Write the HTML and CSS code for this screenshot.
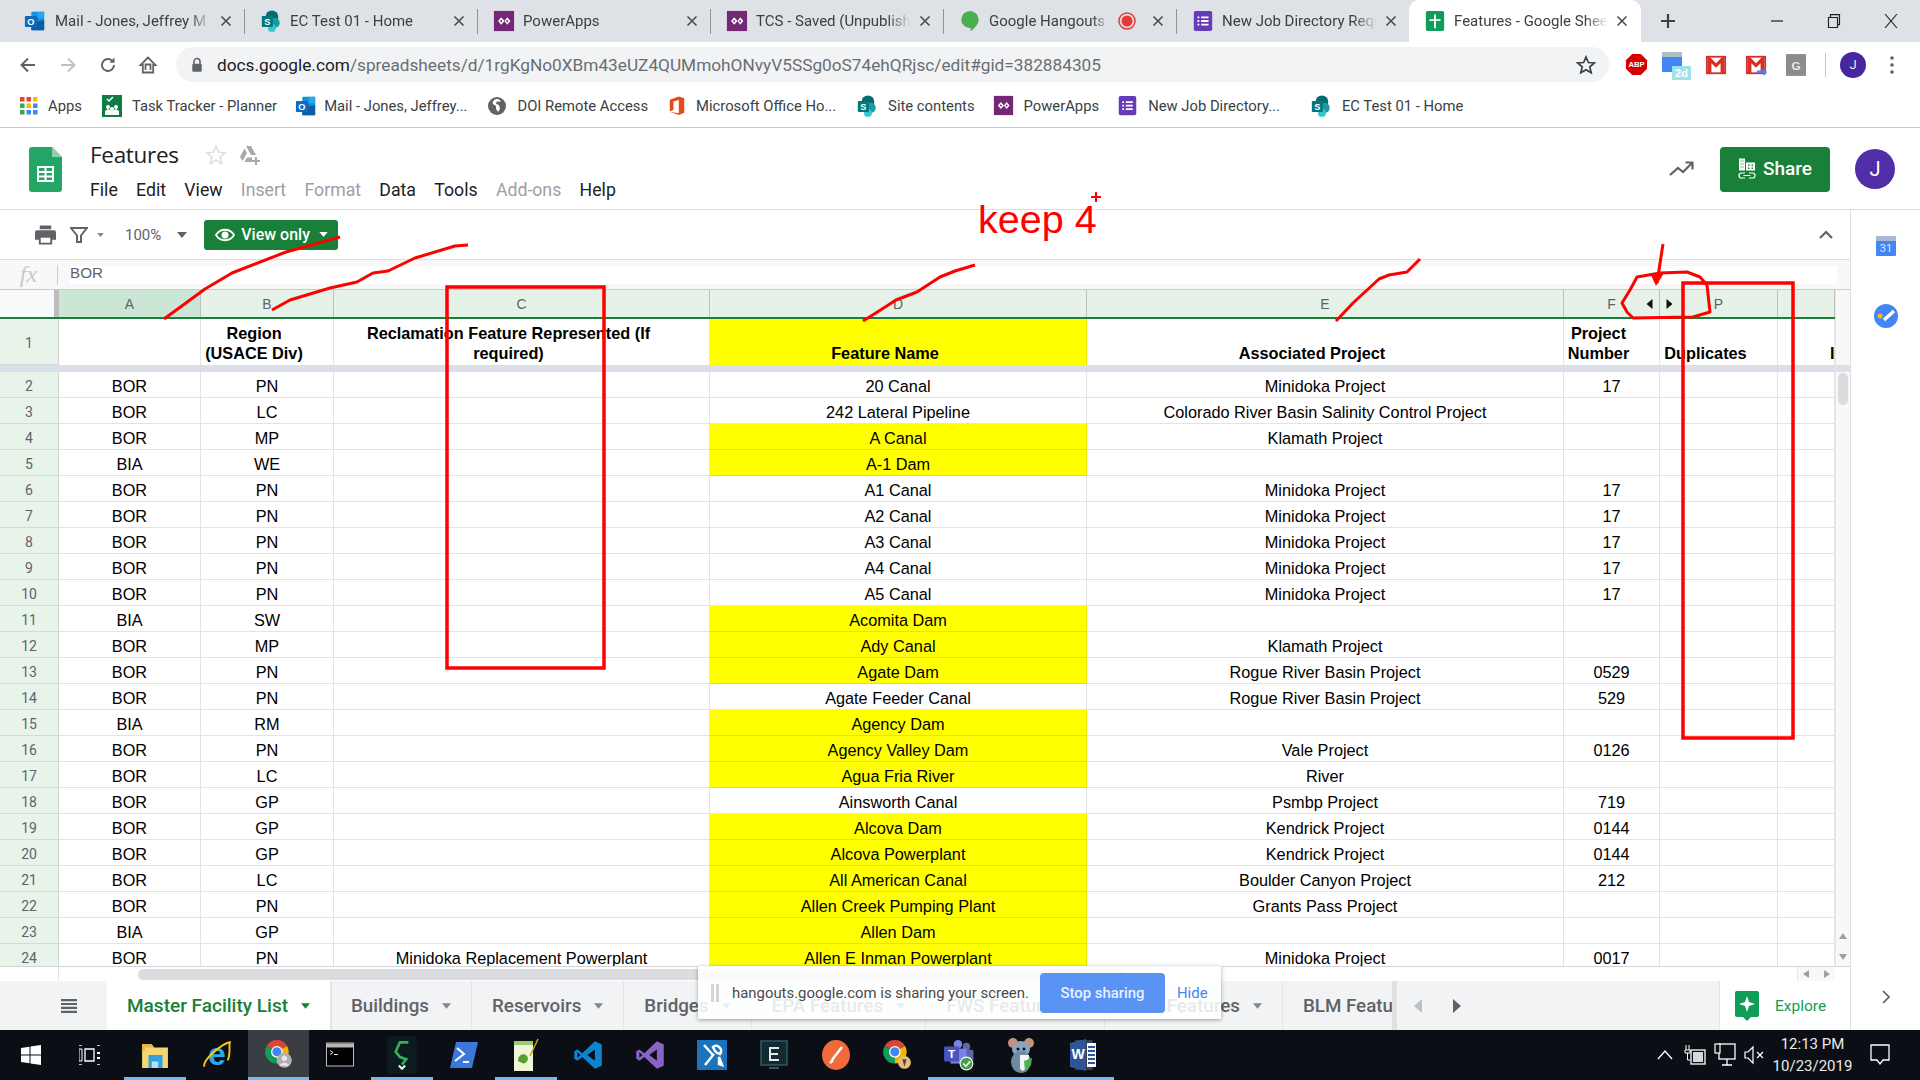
FILE: index.html
```html
<!DOCTYPE html>
<html lang="en">
<head>
<meta charset="utf-8">
<title>Features - Google Sheets</title>
<link rel="stylesheet" href="styles.css">
</head>
<body>
<svg class="defs" width="0" height="0" aria-hidden="true">
  <symbol id="i-outlook" viewBox="0 0 24 24"><rect x="8" y="2" width="14" height="20" rx="1" fill="#1490df"/><rect x="15" y="2" width="7" height="7" fill="#28a8ea"/><rect x="8" y="9" width="7" height="7" fill="#0364b8"/><path d="M8 14l14-3v11H8z" fill="#0a5ea8"/><rect x="1" y="6.500" width="13" height="12" rx="1" fill="#0f6cbd"/><text x="7.500" y="16.500" font-size="10" font-weight="700" fill="#fff" text-anchor="middle" font-family="Liberation Sans">O</text></symbol>
  <symbol id="i-sp" viewBox="0 0 24 24"><circle cx="13" cy="7.500" r="7" fill="#036c70"/><circle cx="16" cy="14" r="5.500" fill="#1a9ba1"/><circle cx="13" cy="19.500" r="4.300" fill="#37c6d0"/><rect x="2" y="6.500" width="12" height="12" rx="1" fill="#03787c"/><text x="8" y="16" font-size="10" font-weight="700" fill="#fff" text-anchor="middle" font-family="Liberation Sans">S</text></symbol>
  <symbol id="i-pa" viewBox="0 0 24 24"><rect x="1" y="1" width="22" height="22" fill="#742774"/><path d="M9 8l3.500 4L9 16l-3.500-4zM15.500 8l3.500 4-3.500 4-3-4z" fill="#fff"/><path d="M9 10.500l1.300 1.500L9 13.500 7.700 12zM15.500 10.500l1.300 1.500-1.300 1.500-1.300-1.500z" fill="#742774"/></symbol>
  <symbol id="i-forms" viewBox="0 0 24 24"><rect x="2" y="1" width="20" height="22" rx="2" fill="#673ab7"/><path d="M6 7h2v2H6zM6 11h2v2H6zM6 15h2v2H6zM10 7h8v2h-8zM10 11h8v2h-8zM10 15h8v2h-8z" fill="#fff"/></symbol>
  <symbol id="i-sheet-tab" viewBox="0 0 24 24"><rect x="2" y="1" width="20" height="22" rx="2" fill="#0f9d58"/><path d="M11 5h2v5h5v2h-5v8h-2v-8H6v-2h5z" fill="#fff"/></symbol>
  <symbol id="i-hangouts" viewBox="0 0 24 24"><path d="M12 1a9.500 9.500 0 0 1 9.500 9.500c0 5.500-5 9.500-9 12.500v-3.500A9 9 0 0 1 2.500 10.500 9.500 9.500 0 0 1 12 1z" fill="#4caf50"/></symbol>
  <symbol id="i-x" viewBox="0 0 12 12"><path d="M1.500 1.500l9 9M10.500 1.500l-9 9" stroke="#45484c" stroke-width="1.500" fill="none"/></symbol>
  <symbol id="i-gmail" viewBox="0 0 24 24"><rect x="2" y="3" width="20" height="18" fill="#fff" stroke="#d32f2f" stroke-width="2"/><path d="M3 3v18h4V10l5 5 5-5v11h4V3h-2l-7 7-7-7z" fill="#d93025"/></symbol>
  <symbol id="i-chrome" viewBox="0 0 24 24"><path d="M12 12L2.470 6.500A11 11 0 0 1 21.530 6.500z" fill="#db4437"/><path d="M12 12L2.470 6.500A11 11 0 0 0 12 23z" fill="#0f9d58"/><path d="M12 12L21.530 6.500A11 11 0 0 1 12 23z" fill="#f4b400"/><circle cx="12" cy="12" r="5.500" fill="#fff"/><circle cx="12" cy="12" r="4.300" fill="#4285f4"/></symbol>
  <symbol id="i-caret" viewBox="0 0 10 6"><path d="M0 0h10L5 6z" fill="currentColor"/></symbol>
</svg>

<div class="page">
  <div class="tabstrip">
    <div class="ctab"><svg class="ctab-ic"><use href="#i-outlook"/></svg><span class="ctab-title">Mail - Jones, Jeffrey M - Outlook</span><svg class="ctab-x"><use href="#i-x"/></svg></div>
    <div class="ctab"><svg class="ctab-ic ctab-ic-sp"><use href="#i-sp"/></svg><span class="ctab-title">EC Test 01 - Home</span><svg class="ctab-x"><use href="#i-x"/></svg></div>
    <div class="ctab"><svg class="ctab-ic ctab-ic-sp"><use href="#i-pa"/></svg><span class="ctab-title">PowerApps</span><svg class="ctab-x"><use href="#i-x"/></svg></div>
    <div class="ctab"><svg class="ctab-ic ctab-ic-sp"><use href="#i-pa"/></svg><span class="ctab-title">TCS - Saved (Unpublished)</span><svg class="ctab-x"><use href="#i-x"/></svg></div>
    <div class="ctab"><svg class="ctab-ic ctab-ic-sp"><use href="#i-hangouts"/></svg><span class="ctab-title">Google Hangouts</span><svg class="rec" viewBox="0 0 18 18" width="18" height="18"><circle cx="9" cy="9" r="8" fill="none" stroke="#e53935" stroke-width="1.500"/><circle cx="9" cy="9" r="5.500" fill="#e53935"/></svg><svg class="ctab-x"><use href="#i-x"/></svg></div>
    <div class="ctab"><svg class="ctab-ic ctab-ic-sp"><use href="#i-forms"/></svg><span class="ctab-title">New Job Directory Request</span><svg class="ctab-x"><use href="#i-x"/></svg></div>
    <div class="ctab ctab-active"><svg class="ctab-ic ctab-ic-sp"><use href="#i-sheet-tab"/></svg><span class="ctab-title">Features - Google Sheets</span><svg class="ctab-x"><use href="#i-x"/></svg></div>
    <svg class="newtab" viewBox="0 0 16 16" width="16" height="16"><path d="M8 1v14M1 8h14" stroke="#3c4043" stroke-width="2.200"/></svg>
    <div class="winctl">
      <svg viewBox="0 0 14 14" width="14" height="14"><path d="M1 7h12" stroke="#202124" stroke-width="1.200"/></svg>
      <svg viewBox="0 0 14 14" width="14" height="14"><path d="M1.500 3.500h9v10h-9zM3.500 3.500V.7h9v10h-2" fill="none" stroke="#202124" stroke-width="1.200"/></svg>
      <svg viewBox="0 0 14 14" width="14" height="14"><path d="M1 0l12 14M13 0L1 14" stroke="#202124" stroke-width="1.100"/></svg>
    </div>
  </div>

  <div class="addrbar">
    <div class="navbtn"><svg viewBox="0 0 20 20" width="20" height="20"><path d="M17 10H4M10 3.500L3.500 10l6.500 6.500" fill="none" stroke="#5f6368" stroke-width="1.900"/></svg></div>
    <div class="navbtn"><svg viewBox="0 0 20 20" width="20" height="20"><path d="M3 10h13M10 3.500l6.500 6.500-6.500 6.500" fill="none" stroke="#bdc1c6" stroke-width="1.900"/></svg></div>
    <div class="navbtn"><svg viewBox="0 0 20 20" width="20" height="20"><path d="M16 10a6 6 0 1 1-1.800-4.300" fill="none" stroke="#5f6368" stroke-width="1.900"/><path d="M16.500 2.500v5.200h-5.200z" fill="#5f6368"/></svg></div>
    <div class="navbtn"><svg viewBox="0 0 20 20" width="20" height="20"><path d="M10 2.500L2.500 10h2.300v7.500h10.400V10h2.300zM7.500 15V9.500h5V15" fill="none" stroke="#5f6368" stroke-width="1.800"/></svg></div>
    <div class="omnibox">
      <svg viewBox="0 0 14 18" width="12" height="16" class="lock"><path d="M3.500 8V5a3.500 3.500 0 0 1 7 0v3" fill="none" stroke="#5f6368" stroke-width="1.800"/><rect x="1.500" y="7.500" width="11" height="9.500" rx="1.300" fill="#5f6368"/></svg>
      <span class="url"><span class="url-host">docs.google.com</span>/spreadsheets/d/1rgKgNo0XBm43eUZ4QUMmohONvyV5SSg0oS74ehQRjsc/edit#gid=382884305</span>
      <svg viewBox="0 0 20 20" width="20" height="20" class="star"><path d="M10 2l2.400 5.500 6 .5-4.600 3.900 1.400 5.900-5.200-3.100-5.200 3.100 1.400-5.900L1.600 8l6-.5z" fill="none" stroke="#3c4043" stroke-width="1.700"/></svg>
    </div>
    <div class="ext"><svg viewBox="0 0 24 24" width="23" height="23"><path d="M7.500 1h9L23 7.500v9L16.500 23h-9L1 16.500v-9z" fill="#d50000"/><text x="12" y="15" font-size="8" font-weight="700" fill="#fff" text-anchor="middle" font-family="Liberation Sans">ABP</text></svg></div>
    <div class="ext"><svg viewBox="0 0 30 30" width="30" height="30"><rect x="1" y="2" width="20" height="20" rx="1" fill="#4285f4"/><rect x="1" y="2" width="20" height="5" fill="#b0bec5"/><rect x="11" y="16" width="19" height="14" fill="#9ee3ea"/><text x="20.500" y="27" font-size="11" font-weight="700" fill="#fff" text-anchor="middle" font-family="Liberation Sans">2d</text></svg></div>
    <div class="ext"><svg width="22" height="22"><use href="#i-gmail"/></svg></div>
    <div class="ext"><svg viewBox="0 0 24 24" width="22" height="22"><use href="#i-gmail"/><path d="M13 18h7v-3l4 4.500L20 24v-3h-7z" fill="#4285f4"/></svg></div>
    <div class="ext"><svg viewBox="0 0 22 24" width="20" height="22"><rect width="22" height="24" fill="#8c8c8c"/><text x="11" y="17" font-size="13" font-weight="700" fill="#e8e8e8" text-anchor="middle" font-family="Liberation Sans">G</text></svg></div>
    <div class="tb-divider"></div>
    <div class="chrome-avatar">J</div>
    <svg class="dots" viewBox="0 0 4 18" width="4" height="18"><circle cx="2" cy="2" r="1.800" fill="#5f6368"/><circle cx="2" cy="9" r="1.800" fill="#5f6368"/><circle cx="2" cy="16" r="1.800" fill="#5f6368"/></svg>
  </div>

  <div class="bookmarks">
    <div class="bm"><svg viewBox="0 0 18 18" width="18" height="18"><g><rect x="0" y="0" width="4.500" height="4.500" fill="#ea4335"/><rect x="6.500" y="0" width="4.500" height="4.500" fill="#ea4335"/><rect x="13" y="0" width="4.500" height="4.500" fill="#fbbc04"/><rect x="0" y="6.500" width="4.500" height="4.500" fill="#34a853"/><rect x="6.500" y="6.500" width="4.500" height="4.500" fill="#fbbc04"/><rect x="13" y="6.500" width="4.500" height="4.500" fill="#4285f4"/><rect x="0" y="13" width="4.500" height="4.500" fill="#34a853"/><rect x="6.500" y="13" width="4.500" height="4.500" fill="#4285f4"/><rect x="13" y="13" width="4.500" height="4.500" fill="#4285f4"/></g></svg><span>Apps</span></div>
    <div class="bm"><svg viewBox="0 0 20 22" width="20" height="22"><rect width="20" height="22" fill="#107c41"/><path d="M5 4l2 2 4-4" stroke="#fff" fill="none" stroke-width="1.500"/><circle cx="6" cy="12" r="2" fill="#fff"/><circle cx="14" cy="12" r="2" fill="#fff"/><circle cx="10" cy="14" r="2" fill="#fff"/><path d="M3 20v-4l3-2 4 2 4-2 3 2v4z" fill="#fff"/></svg><span>Task Tracker - Planner</span></div>
    <div class="bm bm-mail"><svg width="22" height="22"><use href="#i-outlook"/></svg><span>Mail - Jones, Jeffrey...</span></div>
    <div class="bm"><svg viewBox="0 0 20 20" width="20" height="20"><circle cx="10" cy="10" r="9" fill="#5f6368"/><path d="M9 3c-3 1-4 3-3 5l3 2v3l2 3 2-3-1-4-3-1 1-3 2 1 2-1-3-2z" fill="#fff"/></svg><span>DOI Remote Access</span></div>
    <div class="bm"><svg viewBox="0 0 20 22" width="18" height="21"><path d="M2 4.500L12 1l6 2v16l-6 2.500L2 18l10 1.500V5L6 6.500v9.500L2 17.500z" fill="#e64a19"/></svg><span>Microsoft Office Ho...</span></div>
    <div class="bm"><svg width="22" height="22"><use href="#i-sp"/></svg><span>Site contents</span></div>
    <div class="bm bm-tight"><svg width="21" height="21"><use href="#i-pa"/></svg><span>PowerApps</span></div>
    <div class="bm bm-tight"><svg width="21" height="21"><use href="#i-forms"/></svg><span>New Job Directory...</span></div>
    <div class="bm bm-wide"><svg width="22" height="22"><use href="#i-sp"/></svg><span>EC Test 01 - Home</span></div>
  </div>

  <header class="docbar">
    <svg class="doclogo" viewBox="0 0 33 45" width="33" height="45"><path d="M3 0h20l10 10v32a3 3 0 0 1-3 3H3a3 3 0 0 1-3-3V3a3 3 0 0 1 3-3z" fill="#23a566"/><path d="M23 0l10 10H23z" fill="#8ed1b1"/><path d="M8 19h17v16H8zM10 21v3h5.500v-3zM17.500 21v3H23v-3zM10 26v2.500h5.500V26zM17.500 26v2.500H23V26zM10 30.500V33h5.500v-2.500zM17.500 30.500V33H23v-2.500z" fill="#fff" fill-rule="evenodd"/></svg>
    <div class="docmeta">
      <div class="doctitle-row">
        <span class="doctitle">Features</span>
        <svg viewBox="0 0 20 20" width="22" height="22" class="docstar"><path d="M10 2l2.400 5.500 6 .5-4.600 3.900 1.400 5.900-5.200-3.100-5.200 3.100 1.400-5.900L1.600 8l6-.5z" fill="none" stroke="#dadce0" stroke-width="1.300"/></svg>
        <svg viewBox="0 0 22 20" width="22" height="20" class="docdrive"><path d="M8 1h5l5 9h-5zM6.500 3.500L9 8l-4.500 8L2 12zM6.500 17l2.500-4.500h5V17z" fill="#a6a8ab"/><path d="M17 12v3h-3v2h3v3h2v-3h3v-2h-3v-3z" fill="#a6a8ab"/></svg>
      </div>
      <nav class="menu">
        <span>File</span><span>Edit</span><span>View</span><span class="off">Insert</span><span class="off">Format</span><span>Data</span><span>Tools</span><span class="off">Add-ons</span><span>Help</span>
      </nav>
    </div>
    <svg class="trend" viewBox="0 0 26 16" width="26" height="16"><path d="M1 14l8-7 5 4 9-9M16.500 1.500h7v7" fill="none" stroke="#5f6368" stroke-width="2.200"/></svg>
    <div class="share">
      <svg viewBox="0 0 18 22" width="18" height="23"><path d="M1 1h6v12H1zM8 5h9v8H8z" fill="#fff"/><path d="M2.500 3h1v1h-1zM4.500 3h1v1h-1zM2.500 6h1v1h-1zM4.500 6h1v1h-1zM2.500 9h1v1h-1zM4.500 9h1v1h-1zM10 7h1.500v1.500H10zM13.500 7H15v1.500h-1.500zM10 10h1.500v1.500H10zM13.500 10H15v1.500h-1.500z" fill="#188038"/><path d="M7 15.500H3.500a2.500 2.500 0 0 0 0 5H7M11 15.500h3.500a2.500 2.500 0 0 1 0 5H11M5.500 18h7" fill="none" stroke="#fff" stroke-width="1.200"/></svg>
      <span>Share</span>
    </div>
    <div class="doc-avatar">J</div>
  </header>

  <div class="workspace">
    <div class="main">
      <div class="toolbar">
        <svg class="t-print" viewBox="0 0 22 20" width="21" height="20"><path d="M5 0h12v4H5zM2 5h18a2 2 0 0 1 2 2v8h-4v5H4v-5H0V7a2 2 0 0 1 2-2zM6 13v5h10v-5z" fill="#5f6368" fill-rule="evenodd"/></svg>
        <svg class="t-filter" viewBox="0 0 18 18" width="18" height="18"><path d="M1 2h16l-6 7.500V16H7V9.500z" fill="none" stroke="#5f6368" stroke-width="2"/></svg>
        <svg class="t-caret-s"><use href="#i-caret"/></svg>
        <span class="t-zoom">100%</span>
        <svg class="t-caret"><use href="#i-caret"/></svg>
        <div class="viewonly">
          <svg viewBox="0 0 20 20" width="20" height="20"><path d="M1 10C5 3 15 3 19 10 15 17 5 17 1 10z" fill="none" stroke="#fff" stroke-width="1.800"/><circle cx="10" cy="10" r="3.500" fill="#fff"/></svg>
          <span>View only</span>
          <svg class="vo-caret"><use href="#i-caret"/></svg>
        </div>
        <svg class="t-collapse" viewBox="0 0 14 9" width="14" height="9"><path d="M1 8l6-6 6 6" fill="none" stroke="#5f6368" stroke-width="2.200"/></svg>
      </div>

      <div class="formula">
        <span class="fx">fx</span>
        <div class="fx-divider"></div>
        <div class="fx-input">BOR</div>
      </div>

      <div class="gridwrap">
        <div class="grid">
          <div class="row colhead">
            <div class="corner"></div><div class="ch ch-sel">A</div><div class="ch">B</div><div class="ch">C</div><div class="ch">D</div><div class="ch">E</div>
            <div class="ch ch-rel">F<svg class="hid hid-l" viewBox="0 0 6 10"><path d="M6 0v10L0 5z"/></svg></div>
            <div class="ch ch-rel">P<svg class="hid hid-r" viewBox="0 0 6 10"><path d="M0 0v10l6-5z"/></svg></div>
            <div class="ch"></div>
          </div>
          <div class="row row-head">
            <div class="rh">1</div>
            <div class="hc"></div>
            <div class="hc">Region<br>(USACE Div)</div>
            <div class="hc">Reclamation Feature Represented (If<br>required)</div>
            <div class="hc y">Feature Name</div>
            <div class="hc">Associated Project</div>
            <div class="hc">Project<br>Number</div>
            <div class="hc">Duplicates</div>
            <div class="hc hc-last">ID</div>
          </div>
          <div class="freeze"></div>
          <div class="row"><div class="rh">2</div><div class="c">BOR</div><div class="c">PN</div><div class="c"></div><div class="c">20 Canal</div><div class="c">Minidoka Project</div><div class="c">17</div><div class="c"></div><div class="c"></div></div>
          <div class="row"><div class="rh">3</div><div class="c">BOR</div><div class="c">LC</div><div class="c"></div><div class="c">242 Lateral Pipeline</div><div class="c">Colorado River Basin Salinity Control Project</div><div class="c"></div><div class="c"></div><div class="c"></div></div>
          <div class="row"><div class="rh">4</div><div class="c">BOR</div><div class="c">MP</div><div class="c"></div><div class="c y">A Canal</div><div class="c">Klamath Project</div><div class="c"></div><div class="c"></div><div class="c"></div></div>
          <div class="row"><div class="rh">5</div><div class="c">BIA</div><div class="c">WE</div><div class="c"></div><div class="c y">A-1 Dam</div><div class="c"></div><div class="c"></div><div class="c"></div><div class="c"></div></div>
          <div class="row"><div class="rh">6</div><div class="c">BOR</div><div class="c">PN</div><div class="c"></div><div class="c">A1 Canal</div><div class="c">Minidoka Project</div><div class="c">17</div><div class="c"></div><div class="c"></div></div>
          <div class="row"><div class="rh">7</div><div class="c">BOR</div><div class="c">PN</div><div class="c"></div><div class="c">A2 Canal</div><div class="c">Minidoka Project</div><div class="c">17</div><div class="c"></div><div class="c"></div></div>
          <div class="row"><div class="rh">8</div><div class="c">BOR</div><div class="c">PN</div><div class="c"></div><div class="c">A3 Canal</div><div class="c">Minidoka Project</div><div class="c">17</div><div class="c"></div><div class="c"></div></div>
          <div class="row"><div class="rh">9</div><div class="c">BOR</div><div class="c">PN</div><div class="c"></div><div class="c">A4 Canal</div><div class="c">Minidoka Project</div><div class="c">17</div><div class="c"></div><div class="c"></div></div>
          <div class="row"><div class="rh">10</div><div class="c">BOR</div><div class="c">PN</div><div class="c"></div><div class="c">A5 Canal</div><div class="c">Minidoka Project</div><div class="c">17</div><div class="c"></div><div class="c"></div></div>
          <div class="row"><div class="rh">11</div><div class="c">BIA</div><div class="c">SW</div><div class="c"></div><div class="c y">Acomita Dam</div><div class="c"></div><div class="c"></div><div class="c"></div><div class="c"></div></div>
          <div class="row"><div class="rh">12</div><div class="c">BOR</div><div class="c">MP</div><div class="c"></div><div class="c y">Ady Canal</div><div class="c">Klamath Project</div><div class="c"></div><div class="c"></div><div class="c"></div></div>
          <div class="row"><div class="rh">13</div><div class="c">BOR</div><div class="c">PN</div><div class="c"></div><div class="c y">Agate Dam</div><div class="c">Rogue River Basin Project</div><div class="c">0529</div><div class="c"></div><div class="c"></div></div>
          <div class="row"><div class="rh">14</div><div class="c">BOR</div><div class="c">PN</div><div class="c"></div><div class="c">Agate Feeder Canal</div><div class="c">Rogue River Basin Project</div><div class="c">529</div><div class="c"></div><div class="c"></div></div>
          <div class="row"><div class="rh">15</div><div class="c">BIA</div><div class="c">RM</div><div class="c"></div><div class="c y">Agency Dam</div><div class="c"></div><div class="c"></div><div class="c"></div><div class="c"></div></div>
          <div class="row"><div class="rh">16</div><div class="c">BOR</div><div class="c">PN</div><div class="c"></div><div class="c y">Agency Valley Dam</div><div class="c">Vale Project</div><div class="c">0126</div><div class="c"></div><div class="c"></div></div>
          <div class="row"><div class="rh">17</div><div class="c">BOR</div><div class="c">LC</div><div class="c"></div><div class="c y">Agua Fria River</div><div class="c">River</div><div class="c"></div><div class="c"></div><div class="c"></div></div>
          <div class="row"><div class="rh">18</div><div class="c">BOR</div><div class="c">GP</div><div class="c"></div><div class="c">Ainsworth Canal</div><div class="c">Psmbp Project</div><div class="c">719</div><div class="c"></div><div class="c"></div></div>
          <div class="row"><div class="rh">19</div><div class="c">BOR</div><div class="c">GP</div><div class="c"></div><div class="c y">Alcova Dam</div><div class="c">Kendrick Project</div><div class="c">0144</div><div class="c"></div><div class="c"></div></div>
          <div class="row"><div class="rh">20</div><div class="c">BOR</div><div class="c">GP</div><div class="c"></div><div class="c y">Alcova Powerplant</div><div class="c">Kendrick Project</div><div class="c">0144</div><div class="c"></div><div class="c"></div></div>
          <div class="row"><div class="rh">21</div><div class="c">BOR</div><div class="c">LC</div><div class="c"></div><div class="c y">All American Canal</div><div class="c">Boulder Canyon Project</div><div class="c">212</div><div class="c"></div><div class="c"></div></div>
          <div class="row"><div class="rh">22</div><div class="c">BOR</div><div class="c">PN</div><div class="c"></div><div class="c y">Allen Creek Pumping Plant</div><div class="c">Grants Pass Project</div><div class="c"></div><div class="c"></div><div class="c"></div></div>
          <div class="row"><div class="rh">23</div><div class="c">BIA</div><div class="c">GP</div><div class="c"></div><div class="c y">Allen Dam</div><div class="c"></div><div class="c"></div><div class="c"></div><div class="c"></div></div>
          <div class="row"><div class="rh">24</div><div class="c">BOR</div><div class="c">PN</div><div class="c">Minidoka Replacement Powerplant</div><div class="c y">Allen E Inman Powerplant</div><div class="c">Minidoka Project</div><div class="c">0017</div><div class="c"></div><div class="c"></div></div>
        </div>
        <div class="vscroll">
          <div class="vs-top"></div>
          <div class="vs-bar"></div>
          <div class="vs-track"><div class="vs-thumb"></div></div>
          <div class="vs-arrows">
            <svg viewBox="0 0 8 6" width="8" height="6"><path d="M0 6l4-6 4 6z" fill="#9aa0a6"/></svg>
            <svg viewBox="0 0 8 6" width="8" height="6"><path d="M0 0l4 6 4-6z" fill="#9aa0a6"/></svg>
          </div>
        </div>
      </div>

      <div class="hscroll">
        <div class="hs-corner"></div>
        <div class="hs-track"><div class="hs-thumb"></div></div>
        <div class="hs-arrows">
          <svg viewBox="0 0 6 8" width="6" height="8"><path d="M6 0L0 4l6 4z" fill="#9aa0a6"/></svg>
          <svg viewBox="0 0 6 8" width="6" height="8"><path d="M0 0l6 4-6 4z" fill="#9aa0a6"/></svg>
        </div>
      </div>

      <div class="sheetbar">
        <div class="allsheets"><svg viewBox="0 0 16 14" width="16" height="14"><path d="M0 0h16v2.200H0zM0 3.900h16v2.200H0zM0 7.800h16V10H0zM0 11.700h16V14H0z" fill="#5f6368"/></svg></div>
        <div class="sheettabs">
          <div class="stab stab-active"><span>Master Facility List</span><svg class="stab-caret"><use href="#i-caret"/></svg></div>
          <div class="stab"><span>Buildings</span><svg class="stab-caret"><use href="#i-caret"/></svg></div>
          <div class="stab"><span>Reservoirs</span><svg class="stab-caret"><use href="#i-caret"/></svg></div>
          <div class="stab"><span>Bridges</span><svg class="stab-caret"><use href="#i-caret"/></svg></div>
          <div class="stab"><span>EPA Features</span><svg class="stab-caret"><use href="#i-caret"/></svg></div>
          <div class="stab"><span>FWS Features</span><svg class="stab-caret"><use href="#i-caret"/></svg></div>
          <div class="stab"><span>NPS Features</span><svg class="stab-caret"><use href="#i-caret"/></svg></div>
          <div class="stab"><span>BLM Features</span></div>
        </div>
        <div class="tabnav">
          <svg viewBox="0 0 8 14" width="8" height="14"><path d="M8 0v14L0 7z" fill="#bdc1c6"/></svg>
          <svg viewBox="0 0 8 14" width="8" height="14"><path d="M0 0v14l8-7z" fill="#5f6368"/></svg>
        </div>
        <div class="explore">
          <svg viewBox="0 0 24 30" width="24" height="30"><path d="M2 0h20a2 2 0 0 1 2 2v22a2 2 0 0 1-2 2h-6l-4 4-4-4H2a2 2 0 0 1-2-2V2a2 2 0 0 1 2-2z" fill="#0f9d58"/><path d="M12 5l2 6 6 2-6 2-2 6-2-6-6-2 6-2z" fill="#fff"/></svg>
          <span>Explore</span>
        </div>
      </div>
    </div>
    <aside class="side">
      <svg class="side-cal" viewBox="0 0 20 20" width="20" height="22"><rect width="20" height="20" rx="1" fill="#4285f4"/><rect width="20" height="5" fill="#a9b8d0"/><text x="10" y="16" font-size="11" fill="#dbe7fb" text-anchor="middle" font-family="Roboto">31</text></svg>
      <svg class="side-task" viewBox="0 0 24 24" width="24" height="24"><circle cx="12" cy="12" r="12" fill="#4285f4"/><path d="M10 16L20 7" stroke="#fff" stroke-width="3.500"/><circle cx="6" cy="12" r="2.500" fill="#fbbc04"/></svg>
      <svg class="side-chev" viewBox="0 0 8 14" width="8" height="14"><path d="M1 1l6 6-6 6" fill="none" stroke="#5f6368" stroke-width="1.700"/></svg>
    </aside>
  </div>

  <footer class="taskbar">
    <div class="tk"><svg viewBox="0 0 20 20" width="20" height="20"><path d="M0 3l8.500-1.200V9.500H0zM9.500 1.600L20 0v9.500H9.500zM0 10.500h8.500v7.700L0 17zM9.500 10.500H20V20L9.500 18.400z" fill="#fff"/></svg></div>
    <div class="tk tk-view"><svg viewBox="0 0 22 20" width="22" height="20"><path d="M6 4h9v12H6zM0 0h3M0 20h3M18 0h3M18 20h3" fill="none" stroke="#fff" stroke-width="1.300"/><path d="M18 7h3v2h-3zM18 12h3v2h-3z" fill="#fff"/><path d="M0 4h3v12H0z" fill="none" stroke="#fff"/></svg></div>
    <div class="tk on"><svg viewBox="0 0 26 26" width="28" height="28"><path d="M1 3h9l2 3h13v19H1z" fill="#f6d573"/><path d="M1 3h9l2 3H4v3H1z" fill="#e8b93e"/><rect x="7" y="13" width="13" height="12" fill="#2ea3dc"/><rect x="10" y="19" width="6" height="6" fill="#b5e3f8"/></svg></div>
    <div class="tk"><svg viewBox="0 0 30 30" width="32" height="32"><text x="15" y="24" font-size="30" font-weight="700" fill="#2aa8e8" text-anchor="middle" font-family="Liberation Sans">e</text><path d="M3 26C1 20 20 4 27 3 26 8 28 14 25 20" fill="none" stroke="#f5c518" stroke-width="1.800"/></svg></div>
    <div class="tk tk-active on"><svg viewBox="0 0 30 30" width="32" height="34"><use href="#i-chrome" width="24" height="24" x="1"/><circle cx="20" cy="20" r="7" fill="#b0b0b0"/><circle cx="20" cy="18" r="2.500" fill="#e8e8e8"/><path d="M15.500 25a5 5 0 0 1 9 0z" fill="#e8e8e8"/></svg></div>
    <div class="tk"><svg viewBox="0 0 28 24" width="28" height="25"><rect x=".5" y=".5" width="27" height="23" fill="#000" stroke="#bdbdbd"/><rect x="1" y="1" width="26" height="4" fill="#b5b5b5"/><path d="M4 8l3 2-3 2M8 12h4" stroke="#e8e8e8" fill="none"/></svg></div>
    <div class="tk on"><svg viewBox="0 0 28 36" width="30" height="38"><rect width="28" height="36" rx="3" fill="#0c1c1e"/><path d="M20 6h-8l-4 9 4 5 6 2-4 5" fill="none" stroke="#35b05a" stroke-width="2.500"/><path d="M11 28l3 3 3-3" fill="none" stroke="#f0f0f0" stroke-width="2"/></svg></div>
    <div class="tk"><svg viewBox="0 0 28 26" width="28" height="26"><path d="M6 0h22l-6 26H0z" fill="#3c78d8"/><path d="M7 6l7 6-9 7" fill="none" stroke="#fff" stroke-width="2"/><path d="M13 20h6" stroke="#fff" stroke-width="2"/></svg></div>
    <div class="tk on"><svg viewBox="0 0 26 34" width="26" height="36"><rect x="1" y="3" width="19" height="30" fill="#eef5d8"/><rect x="1" y="3" width="19" height="4" fill="#9ccc65"/><path d="M5 22c0-5 6-8 9-4s-2 9-5 7-4-1-4-3z" fill="#5aa02c"/><path d="M25 1l-8 17" stroke="#d4a017" stroke-width="1.500"/></svg></div>
    <div class="tk"><svg viewBox="0 0 24 24" width="30" height="30"><path d="M17.500 1L23 3.500v17L17.500 23 7.500 13.500 3.500 16.500 1 15V9l2.500-1.500 4 3z" fill="#0d84d2"/><path d="M17.500 7.500L11.500 12l6 4.500zM3.500 9.800v4.400L6 12z" fill="#0b0e14"/></svg></div>
    <div class="tk"><svg viewBox="0 0 24 24" width="30" height="30"><path d="M17.500 1L23 3.500v17L17.500 23 7.500 13.500 3.500 16.500 1 15V9l2.500-1.500 4 3z" fill="#8a63c9"/><path d="M17.500 7.500L11.500 12l6 4.500zM3.500 9.800v4.400L6 12z" fill="#0b0e14"/></svg></div>
    <div class="tk"><svg viewBox="0 0 30 30" width="30" height="30"><rect width="30" height="30" fill="#1a73bc"/><path d="M8 25L17 14M16 7a5 5 0 0 1 7 7l-3-1-2-2zM7 5l9 10M22 17l3 8-3-1z" stroke="#fff" stroke-width="2.500" fill="none"/></svg></div>
    <div class="tk"><svg viewBox="0 0 28 30" width="28" height="30"><rect x="1" y="1" width="26" height="24" fill="#122a30" stroke="#2e5c64" stroke-width="1.500"/><path d="M9 7h10v2h-8v4h7v2h-7v4h8v2H9z" fill="#e8e8e8"/><path d="M9 28h10" stroke="#2e5c64" stroke-width="2"/></svg></div>
    <div class="tk"><svg viewBox="0 0 30 30" width="30" height="32"><ellipse cx="15" cy="15" rx="14" ry="15" fill="#f06a3c"/><path d="M21 7l-10 13M9 23l3-3" stroke="#fff" stroke-width="2.500"/></svg></div>
    <div class="tk"><svg viewBox="0 0 30 30" width="32" height="34"><use href="#i-chrome" width="24" height="24" x="1"/><circle cx="22" cy="22" r="6" fill="#e0c080"/><path d="M20 19h4l-2 7z" fill="#6b3f16"/></svg></div>
    <div class="tk on"><svg viewBox="0 0 30 30" width="32" height="32"><circle cx="22" cy="7" r="3.500" fill="#6264a7"/><path d="M17 10h10a1.500 1.500 0 0 1 1.500 1.500V20H17z" fill="#6264a7"/><circle cx="14" cy="5" r="4" fill="#7b83eb"/><rect x="7" y="9" width="15" height="14" fill="#7b83eb"/><rect x="1" y="7" width="14" height="14" rx="1" fill="#4b53bc"/><text x="8" y="18" font-size="11" font-weight="700" fill="#fff" text-anchor="middle" font-family="Liberation Sans">T</text><circle cx="22" cy="23" r="6.500" fill="#fff"/><circle cx="22" cy="23" r="5.500" fill="#43a047"/><path d="M19 23l2.500 2.500 4-4.500" stroke="#fff" stroke-width="1.500" fill="none"/></svg></div>
    <div class="tk on"><svg viewBox="0 0 30 36" width="30" height="38"><circle cx="7" cy="6" r="5" fill="#c98f78"/><circle cx="23" cy="6" r="5" fill="#c98f78"/><ellipse cx="15" cy="12" rx="9" ry="8" fill="#8aa6bd"/><ellipse cx="15" cy="25" rx="10" ry="11" fill="#6e8ba6"/><path d="M14 18h9l-1 11-5 5-3-2z" fill="#f5f5f5"/><path d="M18 24l8-3-1 7-6 5z" fill="#4caf50"/><circle cx="12" cy="12" r="1.500" fill="#111"/><circle cx="18" cy="12" r="1.500" fill="#111"/></svg></div>
    <div class="tk on"><svg viewBox="0 0 28 34" width="28" height="34"><path d="M6 2l16 0a2 2 0 0 1 2 2v26a2 2 0 0 1-2 2H6z" fill="#fff" opacity=".2"/><path d="M1 5l16-4v32L1 29z" fill="#2b579a"/><path d="M18 5h9v24h-9z" fill="#f5f8fc"/><path d="M19 9h7M19 13h7M19 17h7M19 21h7M19 25h7" stroke="#2b579a" stroke-width="2"/><text x="9" y="21" font-size="14" font-weight="700" fill="#fff" text-anchor="middle" font-family="Liberation Sans">W</text></svg></div>
    <div class="tray">
      <div class="tr"><svg viewBox="0 0 16 10" width="16" height="10"><path d="M1 9l7-8 7 8" fill="none" stroke="#fff" stroke-width="1.300"/></svg></div>
      <div class="tr"><svg viewBox="0 0 22 22" width="22" height="22"><rect x="7" y="6" width="14" height="14" fill="none" stroke="#fff" stroke-width="1.300"/><rect x="9" y="8" width="10" height="10" fill="#d8d8d8"/><path d="M2 1v5M5 1v5M1 6h5v3H1zM3.500 9v7h3" fill="none" stroke="#fff"/></svg></div>
      <div class="tr"><svg viewBox="0 0 22 24" width="22" height="24"><rect x="5" y="1" width="16" height="15" fill="none" stroke="#fff" stroke-width="1.300"/><rect x="1" y="1" width="5" height="9" fill="#0b0e14" stroke="#fff" stroke-width="1.200"/><path d="M13 16v6M8 22h10" stroke="#fff" stroke-width="1.300"/></svg></div>
      <div class="tr"><svg viewBox="0 0 22 20" width="22" height="20"><path d="M1 7h3l5-5v16l-5-5H1z" fill="none" stroke="#fff" stroke-width="1.200"/><path d="M13 7l6 6M19 7l-6 6" stroke="#fff" stroke-width="1.200"/></svg></div>
      <div class="clock"><span>12:13 PM</span><span>10/23/2019</span></div>
      <div class="notif"><svg viewBox="0 0 20 22" width="20" height="24"><path d="M1 1h18v15h-6l-3 4-3-4H1z" fill="none" stroke="#fff" stroke-width="1.300"/></svg></div>
    </div>
  </footer>

  <div class="sharing">
    <svg viewBox="0 0 8 18" width="8" height="18"><path d="M0 0h3v18H0zM5 0h3v18H5z" fill="#d4d4d4"/></svg>
    <span class="sharing-text">hangouts.google.com is sharing your screen.</span>
    <span class="stopbtn">Stop sharing</span>
    <span class="hidebtn">Hide</span>
  </div>

  <div class="keep4">keep 4</div>
  <svg class="ink" viewBox="0 0 1920 1080" width="1920" height="1080" aria-hidden="true">
    <path class="s4" d="M447 287H604V668H447z"/>
    <path class="s4" d="M1683 283H1793V738H1683z"/>
    <path class="s2" d="M1096 192v10M1091 197h10"/>
    <path class="s3" d="M164 319L205 289 232 273 286 252 340 237"/>
    <path class="s3" d="M272 310L290 300 330 288 357 282 373 273 388 271 415 258 455 246 468 245"/>
    <path class="s3" d="M863 321L879 311 896 300 917 292 940 277 955 271 975 265"/>
    <path class="s3" d="M1336 321L1353 303 1379 279 1389 275 1407 272 1420 259"/>
    <path class="s3" d="M1663 244L1657 283"/>
    <path class="fillr" d="M1650 273L1664 273 1656 286z"/>
    <path class="s3" d="M1637 277L1660 273 1687 272 1700 277 1707 285 1710 312 1693 317 1633 318 1627 312 1622 303 1630 290z"/>
  </svg>
</div>
</body>
</html>
```

FILE: styles.css
```css
* { box-sizing: border-box; }
html, body { margin: 0; padding: 0; }
body { background: #fff; font-family: "Liberation Sans", Arial, sans-serif; overflow: hidden; }
.defs { position: absolute; }
.page { position: relative; width: 1920px; height: 1080px; display: flex; flex-direction: column; overflow: hidden; }

/* chrome tab strip */
.tabstrip { height: 42px; flex: none; background: #dee1e6; display: flex; padding-left: 12px; align-items: stretch; }
.ctab { width: 233px; flex: none; display: flex; align-items: center; padding: 0 13px 0 12px; font: 15px Roboto, sans-serif; color: #3c4043; background-image: linear-gradient(#8f9499, #8f9499); background-size: 1px 25px; background-position: right 9px; background-repeat: no-repeat; }
.ctab-ic { width: 22px; height: 22px; flex: none; margin-right: 9px; }
.ctab-ic-sp { margin-left: 3px; margin-right: 8px; }
.ctab-title { flex: 1; min-width: 0; white-space: nowrap; overflow: hidden; -webkit-mask-image: linear-gradient(90deg, #000 85%, transparent); mask-image: linear-gradient(90deg, #000 85%, transparent); }
.ctab-x { width: 12px; height: 12px; flex: none; margin-left: 8px; }
.rec { flex: none; margin-left: 8px; margin-right: 8px; }
.ctab-active { background: #fff; border-radius: 10px 10px 0 0; margin-left: -1px; width: 232px; }
.newtab { align-self: center; margin-left: 19px; flex: none; }
.winctl { margin-left: auto; display: flex; align-items: center; gap: 43px; padding-right: 22px; }

/* address bar */
.addrbar { height: 42px; flex: none; background: #fff; display: flex; align-items: center; padding: 3px 0 0 8px; }
.navbtn { width: 40px; height: 34px; flex: none; display: flex; align-items: center; justify-content: center; }
.omnibox { width: 1433px; height: 35px; flex: none; margin-left: 8px; border-radius: 18px; background: #f1f3f4; display: flex; align-items: center; padding-left: 15px; padding-right: 13px; }
.lock { flex: none; }
.url { margin-left: 14px; font: 17.24px Roboto, sans-serif; color: #6a6e73; white-space: nowrap; flex: 1; }
.url-host { color: #202124; }
.star { flex: none; }
.ext { width: 40px; height: 36px; flex: none; display: flex; align-items: center; justify-content: center; }
.omnibox + .ext { margin-left: 7px; }
.tb-divider { width: 1px; height: 24px; background: #c4c7c9; margin-left: 9px; flex: none; }
.chrome-avatar { width: 26px; height: 26px; border-radius: 50%; background: #4527a0; color: #e8e6f5; font: 13px/26px Roboto, sans-serif; text-align: center; margin-left: 14px; flex: none; }
.dots { margin-left: 24px; flex: none; }

/* bookmarks */
.bookmarks { height: 44px; flex: none; background: #fff; border-bottom: 1px solid #c9cbcd; display: flex; align-items: center; padding-left: 20px; gap: 20px; }
.bm { display: flex; align-items: center; gap: 10px; font: 14.8px Roboto, sans-serif; color: #3c4043; white-space: nowrap; }
.bm svg { flex: none; }
.bm-tight { margin-left: -2px; }
.bm-wide { margin-left: 10px; }
.bm-mail { gap: 7px; margin-left: -2px; }

/* doc header */
.docbar { height: 82px; flex: none; border-bottom: 1px solid #dadce0; display: flex; align-items: flex-start; padding: 19px 0 0 29px; position: relative; }
.doclogo { flex: none; }
.docmeta { margin-left: 28px; display: flex; flex-direction: column; margin-top: -10.5px; }
.doctitle-row { display: flex; align-items: center; height: 36px; }
.doctitle { font: 22.5px "Open Sans", Roboto, sans-serif; color: #202124; width: 115px; letter-spacing: -.3px; }
.docstar { flex: none; }
.docdrive { flex: none; margin-left: 11px; }
.menu { display: flex; gap: 18.3px; font: 17.7px Roboto, sans-serif; color: #202124; margin-top: 7px; }
.menu .off { color: #9aa0a6; }
.trend { margin-left: auto; margin-top: 14px; flex: none; }
.share { width: 110px; height: 45px; margin-left: 25px; flex: none; background: #188038; border-radius: 4px; color: #fff; display: flex; align-items: center; justify-content: center; gap: 7px; font: 500 19px Roboto, sans-serif; padding-bottom: 3px; }
.doc-avatar { width: 40px; height: 40px; border-radius: 50%; background: #512da8; color: #fff; font: 20px/40px Roboto, sans-serif; text-align: center; margin: 2px 25px 0 25px; flex: none; }

/* workspace */
.workspace { height: 820px; flex: none; display: flex; }
.main { width: 1851px; flex: none; display: flex; flex-direction: column; border-right: 1px solid #e0e0e0; }
.side { flex: 1; display: flex; flex-direction: column; align-items: center; padding-top: 25px; }
.side-cal { flex: none; }
.side-task { flex: none; margin-top: 47px; }
.side-chev { flex: none; margin-top: auto; margin-bottom: 26px; }

.toolbar { height: 50px; flex: none; border-bottom: 1px solid #dadce0; display: flex; align-items: center; padding-left: 35px; }
.t-print { flex: none; }
.t-filter { flex: none; margin-left: 14px; }
.t-caret-s { width: 7px; height: 4px; margin-left: 9px; color: #80868b; flex: none; }
.t-zoom { font: 15px Roboto, sans-serif; color: #5f6368; margin-left: 21px; }
.t-caret { width: 10px; height: 6px; margin-left: 16px; color: #5f6368; flex: none; }
.viewonly { width: 134px; height: 30px; margin-left: 17px; background: #188038; border-radius: 3px; color: #fff; display: flex; align-items: center; padding-left: 11px; gap: 6px; font: 500 16px Roboto, sans-serif; flex: none; }
.vo-caret { width: 9px; height: 5px; color: #fff; margin-left: 3px; }
.t-collapse { margin-left: auto; margin-right: 17px; flex: none; }

.formula { height: 30px; flex: none; background: #f8f8f8; border-bottom: 1px solid #c9cbcd; display: flex; align-items: center; padding-right: 13px; }
.fx { width: 57px; flex: none; text-align: center; padding-left: 0; font: italic 24px "Liberation Serif", serif; color: #c8c9ca; }
.fx-divider { width: 1px; height: 20px; background: #c9cbcd; flex: none; }
.fx-input { flex: 1; height: 18px; margin-left: 12px; background: #fff; font: 15.2px/14px "Liberation Sans", sans-serif; color: #5f6368; }

.gridwrap { height: 677px; flex: none; display: flex; border-bottom: 1px solid #d4d4d4; }
.grid { width: 1835px; flex: none; overflow: hidden; height: 676px; }
.row { display: grid; grid-template-columns: 59px 142px 133px 376px 377px 477px 96px 118px 57px; grid-template-rows: minmax(0, 1fr); height: 26px; }

.colhead { height: 29px; border-bottom: 2px solid #188038; }
.corner { background: #f8f9fa; border-right: 5px solid #bcbcbc; }
.ch { background: #e6f2e8; border-right: 1px solid #b9c2bb; font-size: 14px; line-height: 29px; text-align: center; color: #5f6368; }
.ch-sel { background: #cbe6d5; }
.ch-rel { position: relative; }
.hid { position: absolute; top: 9px; width: 7px; height: 10px; fill: #111; }
.hid-l { right: 6px; }
.hid-r { left: 6px; }

.row-head { height: 46px; }
.rh { background: #e8f3ea; border-right: 1px solid #cfd6d1; border-bottom: 1px solid #d5dcd7; padding-top: 2px; font: 14px/24px Roboto, sans-serif; color: #5f6368; text-align: center; }
.row-head .rh { line-height: 44px; }
.hc { border-right: 1px solid #e2e3e3; padding: 0 26px 2px 0; font-size: 16.3px; line-height: 20px; font-weight: 700; color: #000; text-align: center; display: flex; align-items: flex-end; justify-content: center; }
.hc-last { justify-content: flex-start; padding-left: 52px; padding-right: 0; white-space: nowrap; }
.freeze { height: 7px; background: #dadfe8; }
.c { border-right: 1px solid #e2e3e3; border-bottom: 1px solid #e2e3e3; padding-top: 2px; font-size: 16.3px; line-height: 25px; color: #000; text-align: center; white-space: nowrap; }
.y { background: #ff0; border-color: #e6e600; }

.vscroll { flex: 1; background: #f8f8f8; display: flex; flex-direction: column; border-left: 1px solid #e8e8e8; }
.vs-top { height: 75px; flex: none; }
.vs-bar { height: 7px; flex: none; background: #dadfe8; }
.vs-track { flex: 1; padding: 1px 2px 0; }
.vs-thumb { height: 32px; background: #dadce0; border-radius: 6px; }
.vs-arrows { height: 40px; flex: none; display: flex; flex-direction: column; align-items: center; gap: 15px; padding-top: 7px; }

.hscroll { height: 14px; flex: none; display: flex; background: #fff; }
.hs-corner { width: 59px; flex: none; border-right: 1px solid #e2e3e3; }
.hs-track { flex: 1; padding: 2px 0 0 79px; }
.hs-thumb { width: 987px; height: 11px; background: #dadce0; border-radius: 6px; }
.hs-arrows { width: 38px; flex: none; display: flex; align-items: center; justify-content: center; gap: 15px; border-left: 1px solid #e8e8e8; background: #f8f8f8; margin-right: 15px; }

.sheetbar { height: 49px; flex: none; background: #f1f3f4; display: flex; }
.allsheets { width: 107px; flex: none; display: flex; align-items: center; justify-content: center; padding-left: 31px; }
.sheettabs { width: 1290px; flex: none; display: flex; overflow: hidden; border-right: 5px solid #e0e0e0; }
.stab { flex: none; height: 49px; display: flex; align-items: center; padding: 0 20px 0 20px; gap: 13px; font: 500 18.8px Roboto, sans-serif; color: #5f6368; border-right: 1px solid #e3e5e7; white-space: nowrap; }
.stab-active { background: #fff; color: #188038; box-shadow: 0 0 2px rgba(0,0,0,.2); font-size: 19px; }
.stab-caret { width: 9px; height: 6px; color: #80868b; flex: none; }
.stab-active .stab-caret { color: #188038; }
.tabnav { width: 322px; flex: none; display: flex; align-items: center; gap: 31px; padding-left: 17px; }
.explore { flex: 1; background: #fff; border-left: 1px solid #e3e5e7; display: flex; align-items: center; padding-left: 15px; gap: 16px; font: 15.5px Roboto, sans-serif; color: #0f9d58; }
.explore svg { flex: none; }

/* taskbar */
.taskbar { height: 50px; flex: none; background: #0b0e14; display: flex; }
.tk { width: 61.9px; height: 50px; flex: none; display: flex; align-items: center; justify-content: center; border-bottom: 3px solid transparent; padding-top: 2px; }
.tk.on { border-bottom-color: #76b9ed; background-clip: padding-box; }
.tk-active { background: #3a3d42; }
.tk-view { padding-right: 5px; }
.tray { margin-left: auto; display: flex; align-items: center; padding-right: 15px; }
.tr { width: 30px; display: flex; justify-content: center; align-items: center; }
.clock { width: 85px; display: flex; flex-direction: column; align-items: center; font: 15px/22px Roboto, sans-serif; color: #eaeaea; }
.notif { width: 50px; display: flex; justify-content: center; }

/* overlays */
.sharing { position: absolute; left: 698px; top: 966px; width: 523px; height: 53px; background: rgba(255,255,255,.86); box-shadow: 0 1px 4px rgba(0,0,0,.35); display: flex; align-items: center; padding-left: 13px; font: 14.9px Roboto, sans-serif; color: #4a4a4a; }
.sharing-text { margin-left: 13px; white-space: nowrap; }
.stopbtn { position: absolute; left: 342px; top: 7px; width: 125px; height: 40px; background: rgba(66,133,244,.88); border-radius: 4px; color: #e8f0fe; font-weight: 500; line-height: 40px; text-align: center; }
.hidebtn { position: absolute; left: 479px; top: 7px; line-height: 40px; color: #4285f4; }
.keep4 { position: absolute; left: 978px; top: 196px; font: 39.5px/46px "Liberation Sans", sans-serif; color: #f00; }
.ink { position: absolute; left: 0; top: 0; pointer-events: none; }
.s3 { fill: none; stroke: #f00; stroke-width: 3; stroke-linejoin: round; }
.s4 { fill: none; stroke: #f00; stroke-width: 3.5; }
.s2 { fill: none; stroke: #f00; stroke-width: 2; }
.fillr { fill: #f00; }
```
